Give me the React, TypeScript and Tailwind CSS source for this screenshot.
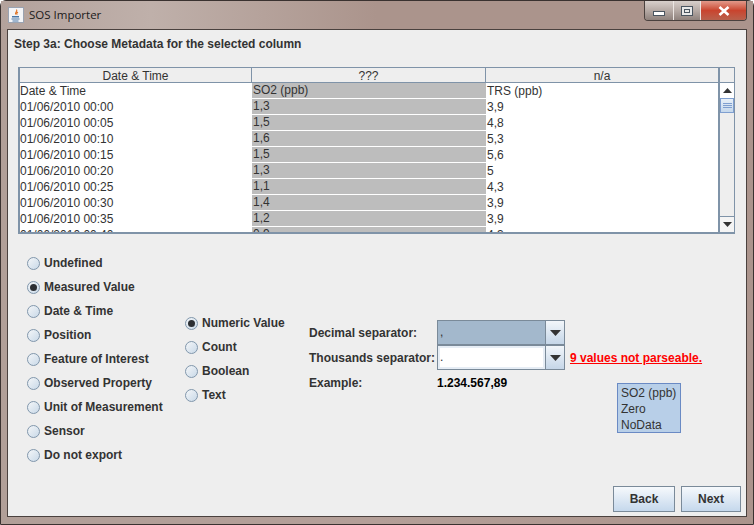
import { ReactNode } from 'react';

const rows = [
  ['Date & Time', 'SO2 (ppb)', 'TRS (ppb)'],
  ['01/06/2010 00:00', '1,3', '3,9'],
  ['01/06/2010 00:05', '1,5', '4,8'],
  ['01/06/2010 00:10', '1,6', '5,3'],
  ['01/06/2010 00:15', '1,5', '5,6'],
  ['01/06/2010 00:20', '1,3', '5'],
  ['01/06/2010 00:25', '1,1', '4,3'],
  ['01/06/2010 00:30', '1,4', '3,9'],
  ['01/06/2010 00:35', '1,2', '3,9'],
  ['01/06/2010 00:40', '0,9', '4,3'],
];

const metadataTypes = [
  'Undefined',
  'Measured Value',
  'Date & Time',
  'Position',
  'Feature of Interest',
  'Observed Property',
  'Unit of Measurement',
  'Sensor',
  'Do not export',
];

const valueTypes = ['Numeric Value', 'Count', 'Boolean', 'Text'];

function Radio({ label, checked }: { label: string; checked?: boolean }) {
  return (
    <div className="flex h-6 items-center">
      <span className="flex h-[13px] w-[13px] items-center justify-center rounded-full border border-[#8197ac] bg-gradient-to-br from-[#f4f6f8] to-[#c9d9e8]">
        {checked && <span className="h-[7px] w-[7px] rounded-full bg-[#2c2f33]" />}
      </span>
      <span className="ml-[4px] text-xs font-bold text-[#333]">{label}</span>
    </div>
  );
}

function ArrowDown() {
  return (
    <svg width="11" height="6" viewBox="0 0 11 6">
      <path d="M0 0h11L5.5 6z" fill="#333" />
    </svg>
  );
}

function Combo({ value, focused }: { value: string; focused?: boolean }) {
  return (
    <div className="flex h-[25px] w-[128px] border border-[#7a8a99] bg-white">
      <div className={`flex-1 border-2 pl-0 pt-[2px] text-xs leading-[14px] text-[#333] ${focused ? 'border-[#a3b8cc] bg-[#a3b8cc]' : 'border-[#e6edf5] bg-white'}`}>
        {value}
      </div>
      <div className="flex w-[19px] items-center justify-center border-l border-[#7a8a99] bg-gradient-to-b from-[#f2f6fa] to-[#c5d6e8]">
        <ArrowDown />
      </div>
    </div>
  );
}

function Button({ children, className }: { children: ReactNode; className: string }) {
  return (
    <div className={`flex h-[26px] items-center justify-center border border-[#7a8a99] bg-gradient-to-b from-[#f6f9fc] to-[#c5d8ec] text-xs font-bold text-[#333] ${className}`}>
      {children}
    </div>
  );
}

export default function App() {
  return (
    <div className="h-[525px] w-[754px] overflow-hidden bg-[#ffffff] font-['Liberation_Sans',sans-serif]">
      <div className="flex h-full flex-col rounded-t-[6px] border border-[#3a3230] bg-gradient-to-r from-[#b19f98] via-[#b49f98] to-[#ab948c] px-[6px] pb-[7px]">
        {/* Title bar */}
        <div className="-mx-[6px] flex h-[28px] shrink-0 items-start justify-between bg-gradient-to-r from-[#b3a29c] via-[#bfb0aa] via-20% to-[#ab948c] to-50% px-[6px]">
          <div className="flex items-center pl-[1px] pt-[5px]">
            <svg width="16" height="16" viewBox="0 0 16 16">
              <rect x="0.5" y="0.5" width="15" height="15" fill="#f4f5f8" stroke="#9aa3b2" />
              <path d="M8.5 2.5c1.5 1.8-2 2.8-.8 5M10 5c-1.5.8-1.5 1.8-.7 2.6" fill="none" stroke="#e07020" strokeWidth="1.1" />
              <path d="M4 9h7v1.5H4zM3.5 11.5h8v1h-8zM4.5 13.5h6v1h-6z" fill="#4a78a8" />
            </svg>
            <span className="ml-[5px] font-['Open_Sans',sans-serif] text-[11.5px] text-[#1a1a1a]">SOS Importer</span>
          </div>
          <div className="flex h-[20px] w-[103px] overflow-hidden rounded-b-[4px] border border-t-0 border-[#4a413e]">
            <div className="flex w-[28px] items-end justify-center bg-gradient-to-b from-[#d8cfcb] via-[#b6aaa5] to-[#8f827d] pb-[4px]">
              <span className="h-[5px] w-[12px] border border-[#4a5560] bg-white" />
            </div>
            <div className="flex w-[27px] items-center justify-center border-l border-[#ece6e3] bg-gradient-to-b from-[#d8cfcb] via-[#b6aaa5] to-[#8f827d]">
              <span className="h-[10px] w-[12px] border border-[#4a5560] bg-[#e8e8e8] p-[2px]">
                <span className="block h-full w-full border border-[#4a5560]" />
              </span>
            </div>
            <div className="flex flex-1 items-center justify-center border-l border-[#ece6e3] bg-gradient-to-b from-[#e2998a] via-[#c9442e] to-[#b8604c]">
              <svg width="12" height="10" viewBox="0 0 12 10">
                <path d="M1.5 1l9 8M10.5 1l-9 8" stroke="#fff" strokeWidth="2.6" />
              </svg>
            </div>
          </div>
        </div>

        {/* Content */}
        <div className="flex min-h-0 flex-1 flex-col border border-[#4a413e] bg-[#eeeeee] pl-[6px] pr-[5px]">
          <div className="h-[37px] shrink-0 pt-[7px] text-xs leading-[14px] font-bold text-[#333]">
            Step 3a: Choose Metadata for the selected column
          </div>

          {/* Table */}
          <div className="ml-[4px] flex h-[167px] w-[717px] shrink-0 border-b-2 border-l-2 border-r border-t border-[#7f93a8] bg-white">
            <div className="min-w-0 flex-1 overflow-hidden">
              <div className="flex h-[15px] border-b border-[#7f93a8] bg-[#eeeeee] text-xs leading-[17px] text-[#333]">
                <div className="w-[232px] border-r border-[#7f93a8] text-center">Date &amp; Time</div>
                <div className="w-[234px] border-r border-[#7f93a8] text-center">???</div>
                <div className="flex-1 text-center">n/a</div>
              </div>
              {rows.map((row) => (
                <div key={row[0]} className="flex h-[16px] text-xs leading-[16px] text-[#333]">
                  <div className="w-[232px]">{row[0]}</div>
                  <div className="w-[234px] border-b border-white bg-[#bdbdbd] pl-[1px] leading-[15px]">{row[1]}</div>
                  <div className="flex-1 pl-[1px]">{row[2]}</div>
                </div>
              ))}
            </div>
            {/* Scrollbar */}
            <div className="flex w-[16px] shrink-0 flex-col border-l-2 border-[#7f93a8] bg-[#eeeeee]">
              <div className="h-[15px] shrink-0 border-b border-[#7f93a8]" />
              <div className="flex h-[15px] shrink-0 items-center justify-center bg-white">
                <svg width="9" height="5" viewBox="0 0 9 5"><path d="M0 5h9L4.5 0z" fill="#333" /></svg>
              </div>
              <div className="flex h-[15px] shrink-0 flex-col items-center justify-center gap-[1px] border border-[#7f9fd0] bg-gradient-to-b from-[#e8f0f8] to-[#c5d8ec]">
                <span className="h-px w-[9px] bg-[#7f9fd0]" />
                <span className="h-px w-[9px] bg-[#7f9fd0]" />
                <span className="h-px w-[9px] bg-[#7f9fd0]" />
              </div>
              <div className="flex-1" />
              <div className="flex h-[16px] shrink-0 items-center justify-center border-t border-[#7f93a8] bg-[#f4f4f4]">
                <svg width="9" height="5" viewBox="0 0 9 5"><path d="M0 0h9L4.5 5z" fill="#333" /></svg>
              </div>
            </div>
          </div>

          {/* Options */}
          <div className="flex min-h-0 flex-1">
            <div className="w-[171px] shrink-0 pl-[13px] pt-[17px]">
              {metadataTypes.map((label) => (
                <Radio key={label} label={label} checked={label === 'Measured Value'} />
              ))}
            </div>
            <div className="w-[124px] shrink-0 pt-[77px]">
              {valueTypes.map((label) => (
                <Radio key={label} label={label} checked={label === 'Numeric Value'} />
              ))}
            </div>
            <div className="min-w-0 flex-1 pt-[86px]">
              <div className="flex h-[25px] items-center">
                <span className="w-[128px] text-xs font-bold text-[#333]">Decimal separator:</span>
                <Combo value="," focused />
              </div>
              <div className="flex h-[25px] items-center">
                <span className="w-[128px] text-xs font-bold text-[#333]">Thousands separator:</span>
                <Combo value="." />
                <span className="ml-[5px] text-xs font-bold text-[#ff0000] underline">9 values not parseable.</span>
              </div>
              <div className="flex h-[25px] items-center">
                <span className="w-[128px] text-xs font-bold text-[#333]">Example:</span>
                <span className="text-xs font-bold text-black">1.234.567,89</span>
              </div>
              <div className="ml-[308px] mt-[-12px] h-[50px] w-[64px] border border-[#6a8ac4] bg-[#b8cfe8] pl-[3px] pt-[1px] text-xs leading-[16px] text-[#333]">
                <div>SO2 (ppb)</div>
                <div>Zero</div>
                <div>NoData</div>
              </div>
            </div>
          </div>

          {/* Footer */}
          <div className="flex h-[30px] shrink-0 justify-end gap-[6px]">
            <Button className="w-[62px]">Back</Button>
            <Button className="w-[60px]">Next</Button>
          </div>
        </div>
      </div>
    </div>
  );
}
